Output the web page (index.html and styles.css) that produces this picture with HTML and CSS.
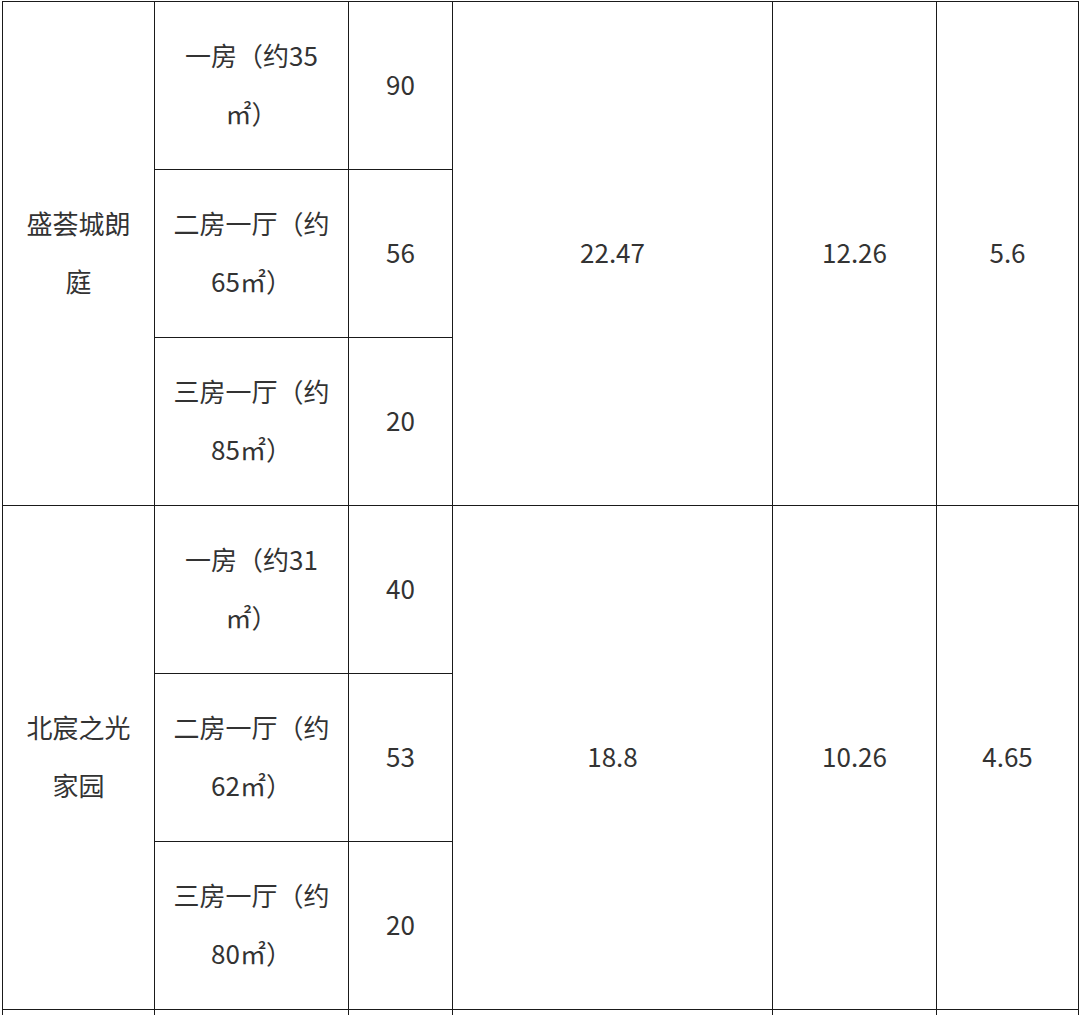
FILE: index.html
```html
<!DOCTYPE html>
<html lang="zh">
<head>
<meta charset="utf-8">
<link rel="stylesheet" href="styles.css">
</head>
<body>
<table class="grid">
  <colgroup>
    <col class="c1"><col class="c2"><col class="c3"><col class="c4"><col class="c5"><col class="c6">
  </colgroup>
  <tbody>
    <tr>
      <td rowspan="3" class="name">盛荟城朗庭</td>
      <td class="type">一房（约35㎡）</td>
      <td>90</td>
      <td rowspan="3">22.47</td>
      <td rowspan="3">12.26</td>
      <td rowspan="3">5.6</td>
    </tr>
    <tr>
      <td class="type">二房一厅（约65㎡）</td>
      <td>56</td>
    </tr>
    <tr>
      <td class="type">三房一厅（约85㎡）</td>
      <td>20</td>
    </tr>
    <tr>
      <td rowspan="3" class="name">北宸之光家园</td>
      <td class="type">一房（约31㎡）</td>
      <td>40</td>
      <td rowspan="3">18.8</td>
      <td rowspan="3">10.26</td>
      <td rowspan="3">4.65</td>
    </tr>
    <tr>
      <td class="type">二房一厅（约62㎡）</td>
      <td>53</td>
    </tr>
    <tr>
      <td class="type">三房一厅（约80㎡）</td>
      <td>20</td>
    </tr>
    <tr>
      <td class="name">&nbsp;</td>
      <td class="type">&nbsp;</td>
      <td>&nbsp;</td>
      <td>&nbsp;</td>
      <td>&nbsp;</td>
      <td>&nbsp;</td>
    </tr>
  </tbody>
</table>
</body>
</html>
```
FILE: styles.css
```css
html, body {
  margin: 0;
  padding: 0;
  background: #fff;
}
body {
  font-family: "Noto Sans CJK SC", "Noto Sans", sans-serif;
  color: #333;
  overflow: hidden;
}
.grid {
  border-collapse: collapse;
  table-layout: fixed;
  width: 1076px;
  margin: 1px 0 0 2px;
}
.c1 { width: 152px; }
.c2 { width: 194px; }
.c3 { width: 104px; }
.c4 { width: 320px; }
.c5 { width: 164px; }
.c6 { width: 142px; }
.grid td {
  border: 1px solid #1a1a1a;
  height: 168px;
  padding: 0 10px 4px;
  box-sizing: border-box;
  text-align: center;
  vertical-align: middle;
  font-size: 26px;
  line-height: 58px;
  word-break: normal;
}
.grid td.name {
  padding: 0 12px 4px;
}
.grid td.type {
  padding: 0 16px 4px;
}
```
